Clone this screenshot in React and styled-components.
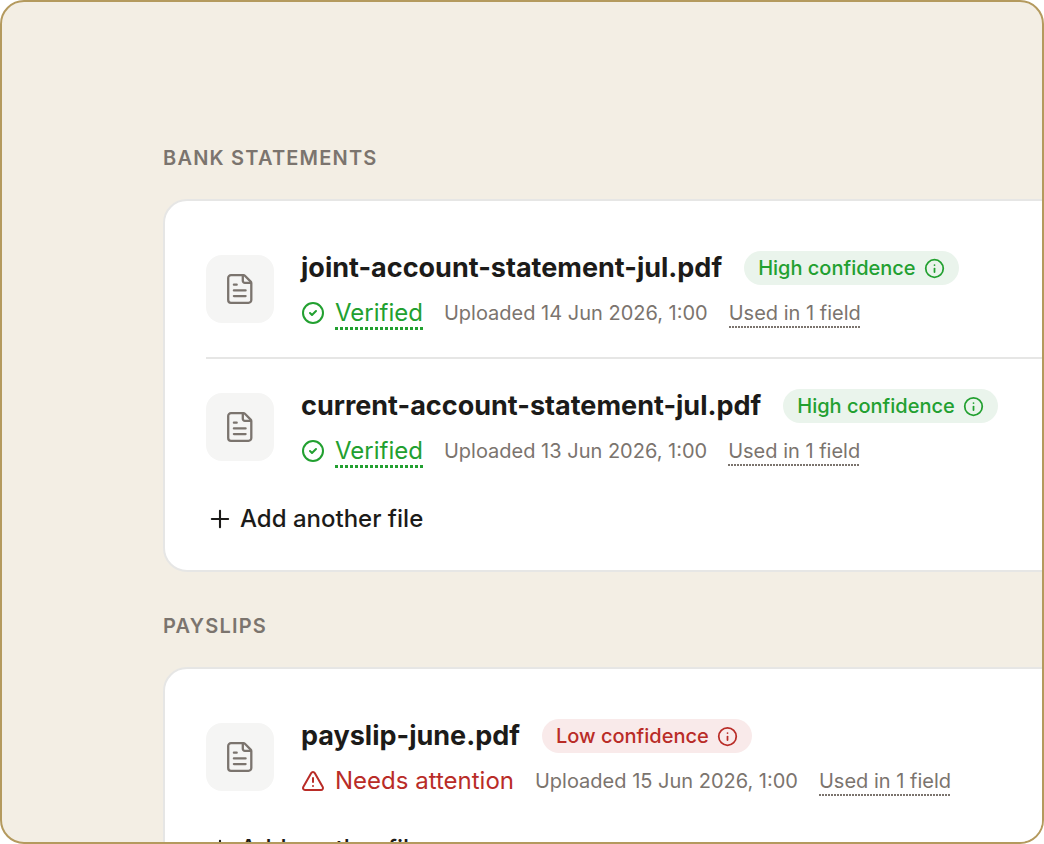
import React from 'react';
import styled, { createGlobalStyle } from 'styled-components';
import { CircleCheck, TriangleAlert, Info, Plus } from 'lucide-react';

const color = {
  canvas: '#f3eee4',
  gold: '#b49a5e',
  card: '#ffffff',
  line: '#e6e6e5',
  tile: '#f5f5f4',
  ink: '#1c1b19',
  muted: '#7b746e',
  green: '#22a030',
  greenSoft: '#eaf4ec',
  red: '#b92c27',
  redSoft: '#f9eaea',
};

const GlobalStyle = createGlobalStyle`
  *, *::before, *::after { box-sizing: border-box; }
  body {
    margin: 0;
    background: #ffffff;
    color: ${color.ink};
    font-family: Inter, "Liberation Sans", sans-serif;
    -webkit-font-smoothing: antialiased;
  }
`;

const Frame = styled.main`
  height: 100vh;
  overflow: hidden;
  padding: 144px 0 0 161px;
  border: 2px solid ${color.gold};
  border-radius: 24px;
  background: ${color.canvas};
`;

const Section = styled.section`
  margin-right: -60px;

  & + & { margin-top: 42px; }
`;

const SectionTitle = styled.h2`
  margin: 0 0 29px;
  font-size: 20px;
  font-weight: 600;
  line-height: 24px;
  letter-spacing: 0.06em;
  text-transform: uppercase;
  color: ${color.muted};
`;

const Card = styled.div`
  padding: 20px 41px 27px;
  border: 2px solid ${color.line};
  border-radius: 24px;
  background: ${color.card};
`;

const FileList = styled.ul`
  margin: 0;
  padding: 0;
  list-style: none;
`;

const FileRow = styled.li`
  display: flex;
  align-items: flex-start;
  gap: 27px;
  padding: 30px 0 26px;

  & + & { border-top: 2px solid ${color.line}; }
`;

const IconTile = styled.div`
  display: flex;
  flex: none;
  align-items: center;
  justify-content: center;
  width: 68px;
  height: 68px;
  margin-top: 4px;
  border-radius: 16px;
  background: ${color.tile};
  color: ${color.muted};
`;

const FileInfo = styled.div`
  display: flex;
  flex-direction: column;
  gap: 10px;
  white-space: nowrap;
`;

const TitleLine = styled.div`
  display: flex;
  align-items: center;
  gap: 22px;
  height: 34px;
`;

const FileName = styled.h3`
  margin: 0;
  font-size: 27px;
  font-weight: 700;
  line-height: 34px;
`;

const Badge = styled.button`
  display: flex;
  align-items: center;
  gap: 8px;
  height: 34px;
  padding: 0 14px;
  border: 0;
  border-radius: 17px;
  background: ${(p) => (p.$level === 'high' ? color.greenSoft : color.redSoft)};
  color: ${(p) => (p.$level === 'high' ? color.green : color.red)};
  font: 500 20px/24px Inter, "Liberation Sans", sans-serif;
`;

const MetaLine = styled.div`
  display: flex;
  align-items: center;
  gap: 21px;
  height: 36px;
  font-size: 20px;
  color: ${color.muted};
`;

const Status = styled.span`
  display: flex;
  align-items: center;
  gap: 10px;
  font-size: 24px;
  line-height: 34px;
  color: ${(p) => (p.$tone === 'good' ? color.green : color.red)};
`;

const DottedLink = styled.a`
  padding: ${(p) => (p.$thick ? '0' : '2px 0')};
  line-height: ${(p) => (p.$thick ? '34px' : '26px')};
  color: inherit;
  text-decoration: none;
  background: repeating-linear-gradient(
      to right,
      currentColor 0 ${(p) => (p.$thick ? '3px' : '2px')},
      transparent ${(p) => (p.$thick ? '3px 5px' : '2px 3px')}
    )
    left bottom / 100% ${(p) => (p.$thick ? '3px' : '2px')} no-repeat;
`;

const AddButton = styled.button`
  display: flex;
  align-items: center;
  gap: 6px;
  height: 48px;
  padding: 0;
  border: 0;
  background: none;
  color: ${color.ink};
  font: 500 24px/30px Inter, "Liberation Sans", sans-serif;
`;

const sections = [
  {
    title: 'Bank statements',
    files: [
      { name: 'joint-account-statement-jul.pdf', level: 'high', verified: true, uploaded: '14 Jun 2026, 1:00' },
      { name: 'current-account-statement-jul.pdf', level: 'high', verified: true, uploaded: '13 Jun 2026, 1:00' },
    ],
  },
  {
    title: 'Payslips',
    files: [{ name: 'payslip-june.pdf', level: 'low', verified: false, uploaded: '15 Jun 2026, 1:00' }],
  },
];

function DocumentIcon() {
  return (
    <svg
      width="26"
      height="30"
      viewBox="0 0 26 30"
      fill="none"
      stroke="currentColor"
      strokeWidth="2.3"
      strokeLinecap="round"
      strokeLinejoin="round"
      aria-hidden="true"
    >
      <path d="M16 1.2H4a2.8 2.8 0 0 0-2.8 2.8v22a2.8 2.8 0 0 0 2.8 2.8h17.5a2.8 2.8 0 0 0 2.8-2.8V9a2 2 0 0 0-.6-1.4l-5.8-5.8A2 2 0 0 0 16.4 1.2z" />
      <path d="M15.8 1.6v5.2a2 2 0 0 0 2 2h6" />
      <path d="M6.9 10.7h2.8M6.9 16.4h11.7M6.9 22.1h11.7" />
    </svg>
  );
}

function FileItem({ file }) {
  return (
    <FileRow>
      <IconTile>
        <DocumentIcon />
      </IconTile>
      <FileInfo>
        <TitleLine>
          <FileName>{file.name}</FileName>
          <Badge type="button" $level={file.level}>
            {file.level === 'high' ? 'High confidence' : 'Low confidence'}
            <Info size={21} strokeWidth={2} aria-hidden="true" />
          </Badge>
        </TitleLine>
        <MetaLine>
          {file.verified ? (
            <Status $tone="good">
              <CircleCheck size={24} strokeWidth={2} aria-hidden="true" />
              <DottedLink href="#verified" $thick>Verified</DottedLink>
            </Status>
          ) : (
            <Status $tone="bad">
              <TriangleAlert size={24} strokeWidth={2} aria-hidden="true" />
              Needs attention
            </Status>
          )}
          <span>Uploaded {file.uploaded}</span>
          <DottedLink href="#fields">Used in 1 field</DottedLink>
        </MetaLine>
      </FileInfo>
    </FileRow>
  );
}

export default function App() {
  return (
    <>
      <GlobalStyle />
      <Frame>
        {sections.map((section) => (
          <Section key={section.title}>
            <SectionTitle>{section.title}</SectionTitle>
            <Card>
              <FileList>
                {section.files.map((file) => (
                  <FileItem key={file.name} file={file} />
                ))}
              </FileList>
              <AddButton type="button">
                <Plus size={28} strokeWidth={1.8} aria-hidden="true" />
                Add another file
              </AddButton>
            </Card>
          </Section>
        ))}
      </Frame>
    </>
  );
}
